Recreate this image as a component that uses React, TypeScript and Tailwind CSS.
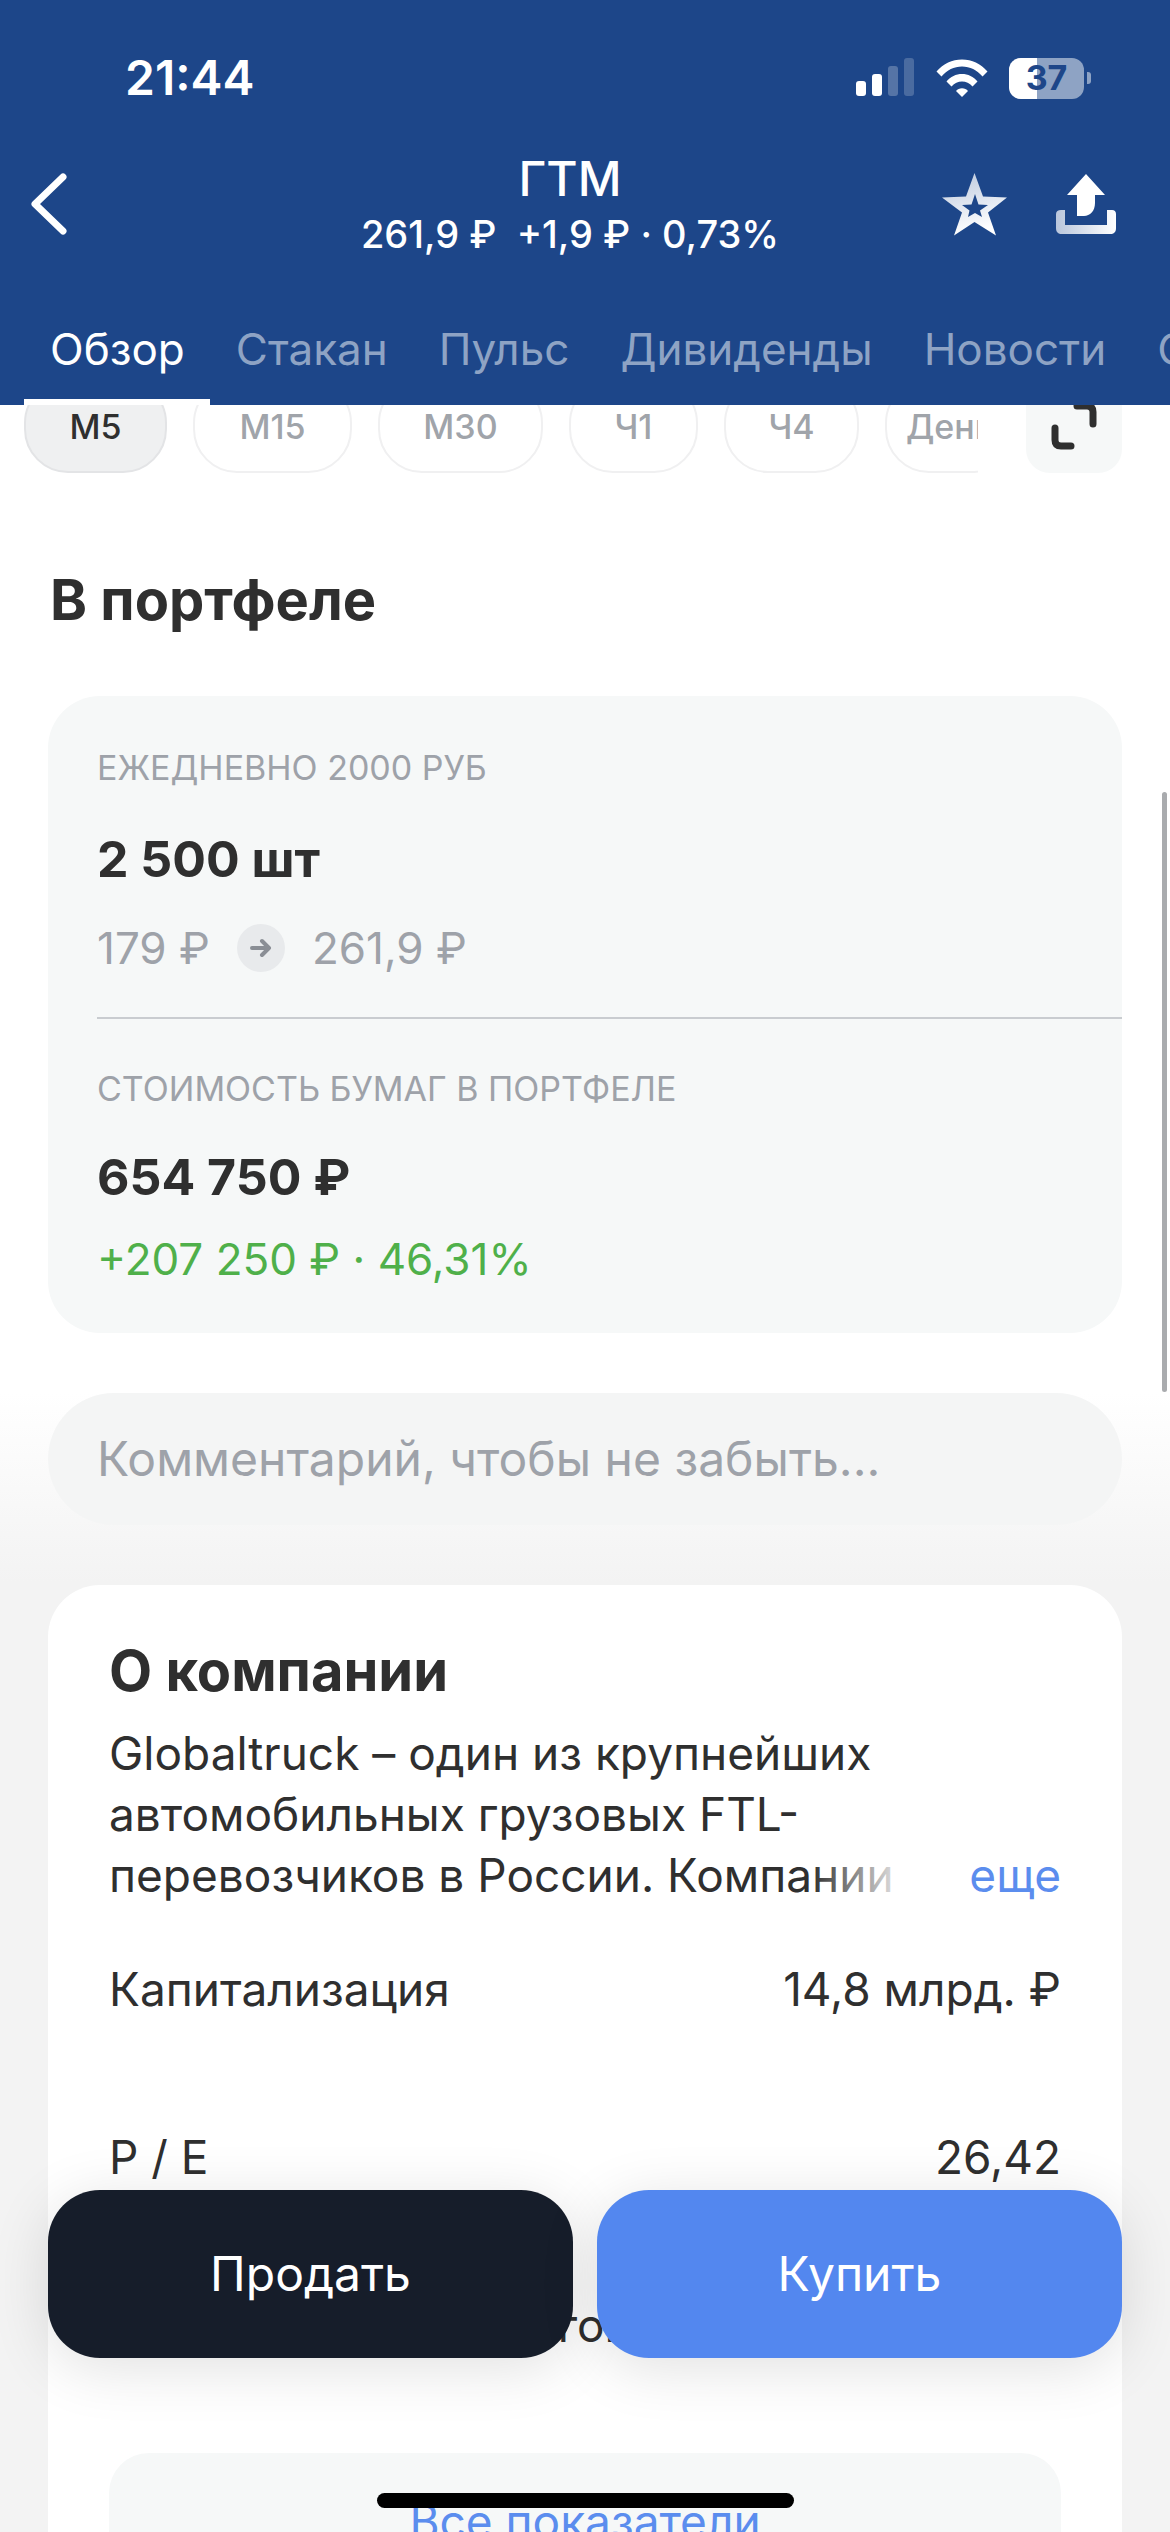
const tabs: [string, string][] = [
  ["Обзор", "text-white"],
  ["Стакан", "text-[#8ea3c4]"],
  ["Пульс", "text-[#8ea3c4]"],
  ["Дивиденды", "text-[#8ea3c4]"],
  ["Новости", "text-[#8ea3c4]"],
  ["Сделки", "text-[#8ea3c4]"],
];
const chips: [string, string][] = [
  ["М15", "w-[159px]"],
  ["М30", "w-[165px]"],
  ["Ч1", "w-[129px]"],
  ["Ч4", "w-[135px]"],
];

function StatusIcons() {
  return (
    <div className="flex items-center">
      <svg width="60" height="40" viewBox="0 0 60 40" className="mr-[20px]" fill="#fff">
        <rect x="0" y="23" width="10" height="15" rx="3" />
        <rect x="16" y="16" width="10" height="22" rx="3" />
        <rect x="32" y="8" width="10" height="30" rx="3" opacity="0.25" />
        <rect x="48" y="0" width="10" height="38" rx="3" opacity="0.2" />
      </svg>
      <svg width="52" height="38" viewBox="0 0 52 38" className="mr-[21px]" fill="#fff">
        <path d="M0.5 12.5C7.5 4.5 16 0.5 26 0.5s18.5 4 25.5 12l-5 5C41 11 34 7.5 26 7.5S11 11 5.500 17.500z" />
        <path d="M10.500 22.500C14.500 17.500 20 15 26 15s11.500 2.500 15.500 7.500l-5 5C33.500 24 30 22.500 26 22.500S18.500 24 15.500 27.500z" />
        <path d="M20 32c1.500-1.800 3.500-2.700 6-2.700s4.500 .9 6 2.700l-6 6z" />
      </svg>
      <div className="relative w-[75px] h-[41px] rounded-[12px] overflow-hidden bg-[#8ea3c4] flex items-center justify-center">
        <div className="absolute left-0 top-0 bottom-0 w-[28px] bg-white" />
        <span className="relative text-[34px] font-bold leading-none text-[#1d4689]">37</span>
      </div>
      <div className="w-[4px] h-[12px] ml-[3px] rounded-r-[3px] bg-[#8ea3c4]" />
    </div>
  );
}

function StarIcon() {
  return (
    <svg width="70" height="68" viewBox="0 0 70 68">
      <defs>
        <linearGradient id="starG" x1="0" y1="0" x2="0.3" y2="1">
          <stop offset="0" stopColor="#b9c6dc" />
          <stop offset="1" stopColor="#ffffff" />
        </linearGradient>
      </defs>
      <path
        fill="url(#starG)"
        fillRule="evenodd"
        d="M34.500 3L43 26.500 67 27.500 48 42.500 56 65.500 34.500 52 14 65.500 22 42.500 2 27.500 26 26.500zM35 24L31.500 34.500 22 35 29.500 40.500 28 47 35 43 42 47 40 40.500 48 35 38.500 34.500z"
      />
    </svg>
  );
}

function ShareIcon() {
  return (
    <svg width="60" height="60" viewBox="0 0 60 60">
      <defs>
        <linearGradient id="trayG" x1="0" y1="0" x2="1" y2="0">
          <stop offset="0" stopColor="#b9c6dc" />
          <stop offset="1" stopColor="#ffffff" />
        </linearGradient>
      </defs>
      <path fill="#fff" d="M30 0L49 21H39V29C39 37 34 42 28 42H21V21H11z" />
      <path
        fill="url(#trayG)"
        d="M5 36H9V51H51V36H56C58.500 36 60 37.500 60 40V54C60 58 58 60 54 60H6C2 60 0 58 0 54V40C0 37.500 2 36 5 36z"
      />
    </svg>
  );
}

function Row({ left, right }: { left: string; right: string }) {
  return (
    <div className="flex justify-between h-[168px] text-[46px] leading-[60px] text-[#2f2f2f]">
      <span>{left}</span>
      <span>{right}</span>
    </div>
  );
}

export default function App() {
  return (
    <div className="relative w-[1170px] h-[2532px] overflow-hidden bg-white [font-family:Inter,sans-serif]">
      <header className="relative z-10 h-[405px] bg-[#1d4689] flex flex-col text-white">
        <div className="flex items-center justify-between h-[56px] mt-[50px] pl-[125px] pr-[79px]">
          <span className="text-[48px] font-semibold leading-none">21:44</span>
          <StatusIcons />
        </div>
        <div className="flex items-center justify-between h-[112px] mt-[42px] pl-[30px] pr-[54px]">
          <svg width="40" height="64" viewBox="0 0 40 64" fill="none" stroke="#fff" strokeWidth="7" strokeLinecap="round" strokeLinejoin="round">
            <path d="M33 5L5 32L33 59" />
          </svg>
          <div className="flex flex-col items-center ml-[130px]">
            <span className="text-[48px] font-medium leading-[60px]">ГТМ</span>
            <span className="text-[38px] font-medium leading-[50px] whitespace-pre">261,9 ₽  +1,9 ₽ · 0,73%</span>
          </div>
          <div className="flex items-center gap-[46px]">
            <StarIcon />
            <ShareIcon />
          </div>
        </div>
        <nav className="flex gap-[51px] pl-[50px] mt-auto h-[86px] overflow-hidden relative text-[44px] leading-[60px] whitespace-nowrap">
          {tabs.map(([t, c]) => (
            <span key={t} className={c}>{t}</span>
          ))}
          <div className="absolute left-[24px] bottom-0 w-[186px] h-[6px] bg-white" />
        </nav>
      </header>

      <div className="h-[68px] flex pl-[24px] pr-[48px] justify-between overflow-hidden">
        <div className="flex gap-[26px] w-[954px] overflow-hidden -mt-[26px] h-[94px]">
          <div className="w-[143px] h-[94px] shrink-0 rounded-[44px] border-2 border-[#e3e4e6] bg-[#eff0f1] flex items-center justify-center text-[34px] font-medium text-[#2f2f2f]">М5</div>
          {chips.map(([t, w]) => (
            <div key={t} className={`${w} h-[94px] shrink-0 rounded-[44px] border-2 border-[#f0f0f1] flex items-center justify-center text-[34px] font-medium text-[#a0a4aa]`}>{t}</div>
          ))}
          <div className="w-[130px] h-[94px] shrink-0 rounded-[44px] border-2 border-[#f0f0f1] flex items-center justify-center text-[34px] font-medium text-[#a0a4aa]">День</div>
        </div>
        <div className="w-[96px] h-[94px] -mt-[26px] rounded-[24px] bg-[#f6f8f8] flex items-center justify-center">
          <svg width="46" height="48" viewBox="0 0 46 48" fill="none" stroke="#2f2f2f" strokeWidth="7" strokeLinecap="round" strokeLinejoin="round">
            <path d="M26 4H36C40 4 42 6 42 10V22" />
            <path d="M4 26V38C4 42 6 44 10 44H20" />
          </svg>
        </div>
      </div>

      <h2 className="mt-[92px] ml-[50px] text-[56px] leading-[70px] font-bold text-[#2f2f2f]">В портфеле</h2>

      <section className="mx-[48px] mt-[61px] h-[637px] rounded-[52px] bg-[#f6f8f8] pl-[49px] pt-[50px] flex flex-col">
        <div className="text-[34px] leading-[44px] text-[#9ea2a9]">ЕЖЕДНЕВНО 2000 РУБ</div>
        <div className="mt-[39px] text-[50px] leading-[60px] font-bold text-[#2f2f2f]">2 500 шт</div>
        <div className="mt-[31px] flex items-center text-[44px] leading-[56px] text-[#9ea2a9]">
          <span>179 ₽</span>
          <div className="ml-[27px] mr-[27px] w-[48px] h-[48px] rounded-full bg-[#e8eaec] flex items-center justify-center">
            <svg width="24" height="20" viewBox="0 0 24 20" fill="none" stroke="#8a8e95" strokeWidth="4" strokeLinecap="round" strokeLinejoin="round">
              <path d="M3 10H20M13 3L20 10L13 17" />
            </svg>
          </div>
          <span>261,9 ₽</span>
        </div>
        <div className="mt-[41px] h-[2px] bg-[#c9ccd0]" />
        <div className="mt-[48px] text-[34px] leading-[44px] text-[#9ea2a9]">СТОИМОСТЬ БУМАГ В ПОРТФЕЛЕ</div>
        <div className="mt-[36px] text-[50px] leading-[60px] font-bold text-[#2f2f2f]">654 750 ₽</div>
        <div className="mt-[24px] text-[44px] leading-[56px] text-[#4fb04a]">+207 250 ₽ · 46,31%</div>
      </section>

      <div className="mt-[60px] h-[1200px] bg-[linear-gradient(to_bottom,#ffffff,#f3f3f3_190px)] px-[48px]">
        <div className="h-[132px] rounded-[66px] bg-[#f4f5f5] pl-[49px] flex items-center text-[48px] text-[#9ea2a9]">Комментарий, чтобы не забыть...</div>
        <section className="mt-[60px] h-[1000px] rounded-[52px] bg-white px-[61px] pt-[50px]">
          <h3 className="text-[56px] leading-[72px] font-bold text-[#2f2f2f]">О компании</h3>
          <div className="relative mt-[16px] text-[46px] leading-[61px] text-[#2f2f2f] h-[183px]">
            <div className="whitespace-nowrap">Globaltruck – один из крупнейших</div>
            <div className="whitespace-nowrap">автомобильных грузовых FTL-</div>
            <div className="w-[800px] overflow-hidden whitespace-nowrap">перевозчиков в России. Компании</div>
            <div className="absolute right-[150px] bottom-0 w-[100px] h-[61px] bg-gradient-to-r from-white/0 to-white" />
            <span className="absolute right-0 bottom-0 text-[#5b8dee]">еще</span>
          </div>
          <div className="mt-[53px]">
            <Row left="Капитализация" right="14,8 млрд. ₽" />
            <Row left="P / E" right="26,42" />
            <Row left="Дневной объем торгов" right="189,29 млн. ₽" />
          </div>
          <div className="mt-[-10px] h-[200px] rounded-[40px] bg-[#f6f8f8] pt-[34px] text-center text-[46px] text-[#5b8dee]">Все показатели</div>
        </section>
      </div>

      <div className="absolute left-[48px] right-[48px] top-[2190px] flex gap-[24px] z-20">
        <button className="flex-1 h-[168px] rounded-[52px] bg-[#161d2a] text-white text-[48px] shadow-[0_10px_60px_rgba(0,0,0,0.12)]">Продать</button>
        <button className="flex-1 h-[168px] rounded-[52px] bg-[#5387ef] text-white text-[48px] shadow-[0_10px_60px_rgba(0,0,0,0.12)]">Купить</button>
      </div>

      <div className="absolute z-30 left-[377px] top-[2493px] w-[417px] h-[15px] rounded-full bg-black" />
      <div className="absolute z-30 left-[1162px] top-[792px] w-[5px] h-[600px] rounded-full bg-[#a9abae]" />
    </div>
  );
}
